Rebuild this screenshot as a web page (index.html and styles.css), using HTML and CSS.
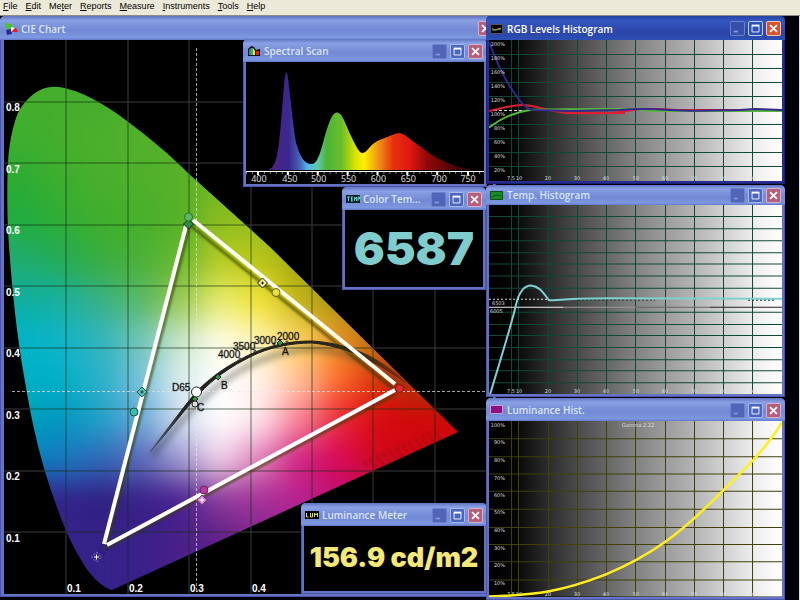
FILE: index.html
```
<!DOCTYPE html>
<html lang="en">
<head>
<meta charset="utf-8">
<title>CIE Chart</title>
<link rel="stylesheet" href="styles.css">
</head>
<body>
<svg class="defs" aria-hidden="true">
  <defs>
    <symbol id="i-min" viewBox="0 0 15 15"><path d="M3 11h5" stroke="currentColor" stroke-width="2"/></symbol>
    <symbol id="i-max" viewBox="0 0 15 15"><path d="M3.500 4.500h8v7h-8z" fill="none" stroke="currentColor"/><path d="M3 4h9" stroke="currentColor" stroke-width="2"/></symbol>
    <symbol id="i-close" viewBox="0 0 15 15"><path d="M3.500 3.500l8 8M11.500 3.500l-8 8" stroke="currentColor" stroke-width="2"/></symbol>
    <linearGradient id="gray" x1="0" x2="1" y1="0" y2="0">
      <stop offset="0" stop-color="#000"/><stop offset=".09" stop-color="#060606"/><stop offset=".2" stop-color="#2c2c2c"/><stop offset=".3" stop-color="#4a4a4a"/><stop offset=".5" stop-color="#828282"/><stop offset=".7" stop-color="#b4b4b4"/><stop offset=".9" stop-color="#ececec"/><stop offset="1" stop-color="#fff"/>
    </linearGradient>
  </defs>
</svg>
<nav class="menubar">
  <button><u>F</u>ile</button><button><u>E</u>dit</button><button>Me<u>t</u>er</button><button><u>R</u>eports</button><button><u>M</u>easure</button><button><u>I</u>nstruments</button><button><u>T</u>ools</button><button><u>H</u>elp</button>
</nav>
<main class="desktop">
  <section class="window cie">
    <header class="titlebar">
      <svg class="app-icon" viewBox="0 0 14 12"><path d="M0 0l8 1 1 5-6 1z" fill="#4fbf38"/><path d="M7 5l5 0 2 4-6 0z" fill="#d22"/><path d="M2 7l5-1 1 5-5 1z" fill="#2b2a8c"/><path d="M7 4l4 1-4 4z" fill="#eee"/></svg>
      <h2>CIE Chart</h2>
      <button class="ctl close" aria-label="Close"><svg><use href="#i-close"/></svg></button>
    </header>
    <svg class="view" viewBox="4 40 489 554" preserveAspectRatio="none">
      <defs>
        <clipPath id="locus"><path d="M112 590C102 588 92 576 86 568C74 549 66 533 58 510C50 488 44 470 38 446C32 422 28 400 24 376C16 330 11 280 8 230C7 205 7 180 8 163C9 145 12 130 16 118C20 106 30 95 40 90C46 87 56 85 68 89C80 92 90 97 100 103C112 110 118 114 127 121C150 138 170 155 188 173L218 200L270 247L458 432Z"/></clipPath>
        <filter id="soft" x="-20%" y="-20%" width="140%" height="140%" color-interpolation-filters="sRGB"><feGaussianBlur stdDeviation="15"/></filter>
        <filter id="shade" x="-20%" y="-20%" width="140%" height="140%"><feGaussianBlur stdDeviation="3"/></filter>
        <filter id="fine" x="-20%" y="-20%" width="140%" height="140%"><feGaussianBlur stdDeviation="1"/></filter>
        <linearGradient id="arc" gradientUnits="userSpaceOnUse" x1="150" y1="0" x2="406" y2="0"><stop offset="0" stop-color="#222" stop-opacity=".3"/><stop offset=".12" stop-color="#222"/><stop offset=".8" stop-color="#2a2418"/><stop offset="1" stop-color="#402010" stop-opacity=".4"/></linearGradient>
      </defs>
      <rect x="4" y="40" width="489" height="554" fill="#000"/>
      <path class="grid-out" d="M66 40V594M128 40V594M189 40V594M251 40V594M312 40V594M373 40V594M435 40V594M4 102H493M4 163H493M4 225H493M4 286H493M4 348H493M4 409H493M4 471H493M4 532H493"/>
      <g clip-path="url(#locus)">
        <g id="field" filter="url(#soft)"></g>
        <path class="grid-in" d="M66 40V594M128 40V594M189 40V594M251 40V594M312 40V594M373 40V594M435 40V594M4 102H493M4 163H493M4 225H493M4 286H493M4 348H493M4 409H493M4 471H493M4 532H493"/>
        <path d="M364 464L440 430M375 468L445 436" stroke="#8c0c08" stroke-width="6" stroke-dasharray="3 4" opacity=".4" filter="url(#fine)"/>
        <path d="M152 456C178 424 200 400 220 384C255 358 285 350 312 349C350 350 380 366 404 390" fill="none" stroke="#333" stroke-width="6" opacity=".4" filter="url(#shade)"/>
      </g>
      <path d="M196.500 48V590M12 391.500H487" class="cross"/>
      <path d="M150 452C168 428 183 408 196 392C214 374 230 364 251 354C275 343 295 341 312 341C345 343 378 355 406 383C374 360 345 346 312 343C290 343 268 348 252 356C230 367 214 378 199 394C184 410 170 430 150 452Z" fill="url(#arc)" stroke="url(#arc)"/>
      <path d="M189 228L106 548L396 394M191 226L396 391" fill="none" stroke="#3a3a00" stroke-width="3" opacity=".65" filter="url(#fine)"/>
      <path d="M187 222L104 544" stroke="#fff" stroke-width="4"/><path d="M193 220L395 384" stroke="#fffff0" stroke-width="4"/><path d="M107 545L395 390" stroke="#fff" stroke-width="4"/>
      <g stroke="#222">
        <path d="M188.500 219l5 5-5 5-5-5z" fill="#2f8a40"/><circle cx="188.500" cy="217" r="4" fill="#5fb868" stroke="#2c7038"/>
        <path d="M262.500 278l5 5-5 5-5-5z" fill="#f4ec90"/><path d="M261 283h3M262.500 281.500v3"/>
        <circle cx="276" cy="292.500" r="4" fill="#e6e23c" stroke="#666010"/>
        <path d="M142 387l5 5-5 5-5-5z" fill="#54c4b4" stroke="#145858"/><path d="M140.500 392h3M142 390.500v3"/>
        <circle cx="134" cy="412" r="4" fill="#3cbcae" stroke="#145858"/>
        <path d="M202 495l5 5-5 5-5-5z" fill="#d080c8" stroke="#804080"/><path d="M199.500 500h5M202 497.500v5" stroke="#fff"/>
        <circle cx="204" cy="490" r="4" fill="#b83a98" stroke="#702060"/>
        <path d="M96.500 552l5 5-5 5-5-5z" fill="none" stroke="#9890d0" stroke-dasharray="2 2"/><path d="M94 557h5M96.500 554.500v5" stroke="#fff"/><circle cx="103" cy="549" r="4" fill="none" stroke="#201858" stroke-dasharray="2 2"/>
        <circle cx="399.500" cy="388.500" r="4" fill="#e02c28" stroke="#901010"/>
        <path d="M218 374l3 3-3 3-3-3z" fill="#2c9c38"/><path d="M280 340l3 3-3 3-3-3z" fill="#2c9c50"/><path d="M195 396l3 3-3 3-3-3z" fill="#2c9c38"/>
        <circle cx="195" cy="404" r="3" fill="#ddd"/><circle cx="196.500" cy="392" r="5" fill="#fff"/>
        <circle cx="240" cy="359" r="1" fill="#fff"/><circle cx="255" cy="351" r="1" fill="#fff"/><circle cx="274" cy="344" r="1" fill="#fff"/><circle cx="287" cy="342" r="1" fill="#fff"/>
      </g>
      <g class="marks"><text x="172" y="391">D65</text><text x="218" y="358">4000</text><text x="233" y="350">3500</text><text x="254" y="344">3000</text><text x="277" y="340">2000</text><text x="282" y="355">A</text><text x="221" y="389">B</text><text x="197" y="411">C</text></g>
      <g class="axis"><text x="6" y="111">0.8</text><text x="6" y="173">0.7</text><text x="6" y="234">0.6</text><text x="6" y="296">0.5</text><text x="6" y="357">0.4</text><text x="6" y="419">0.3</text><text x="6" y="480">0.2</text><text x="6" y="542">0.1</text><text x="67" y="592">0.1</text><text x="129" y="592">0.2</text><text x="190" y="592">0.3</text><text x="252" y="592">0.4</text></g>
    </svg>
  </section>

  <section class="window spectral">
    <header class="titlebar">
      <svg class="app-icon" viewBox="0 0 14 12"><path d="M1 11V4l3-3 3 1 2 3 4-1v7z" fill="#111"/><path d="M2 10V5l2-2v7z" fill="#38b"/><path d="M4 10V3h2v7z" fill="#3b4"/><path d="M6 10V3l2 3v4z" fill="#fe3"/><path d="M9 10V6h3v4z" fill="#d22"/></svg>
      <h2>Spectral Scan</h2>
      <button class="ctl min" aria-label="Minimize"><svg><use href="#i-min"/></svg></button><button class="ctl" aria-label="Maximize"><svg><use href="#i-max"/></svg></button><button class="ctl close" aria-label="Close"><svg><use href="#i-close"/></svg></button>
    </header>
    <svg class="view" viewBox="246 62 239 122" preserveAspectRatio="none">
      <defs><linearGradient id="rainbow" gradientUnits="userSpaceOnUse" x1="268" x2="478" y1="0" y2="0"><stop offset="0" stop-color="#502080"/><stop offset=".1" stop-color="#3a2890"/><stop offset=".15" stop-color="#4860b8"/><stop offset=".19" stop-color="#50b8e8"/><stop offset=".24" stop-color="#60c8a0"/><stop offset=".28" stop-color="#4cb438"/><stop offset=".35" stop-color="#68bc28"/><stop offset=".42" stop-color="#dce400"/><stop offset=".46" stop-color="#fff000"/><stop offset=".53" stop-color="#f09018"/><stop offset=".6" stop-color="#e83010"/><stop offset=".68" stop-color="#e01810"/><stop offset=".76" stop-color="#900808"/><stop offset=".9" stop-color="#480404"/><stop offset="1" stop-color="#200000"/></linearGradient></defs>
      <rect x="246" y="62" width="239" height="122"/>
      <path fill="url(#rainbow)" d="M268 170C276 168 277 155 279 144C283 110 284 74 286.500 72C289 74 291 110 296 142C300 156 304 164 312 164C318 164 321 152 326 133C330 120 333 113 337 112.500C342 112 345 121 350 133C356 145 359 153 363 153C368 153 370 144 380 140C386 138 396 133 400 133C406 134 410 139 416 143C424 148 430 154 438 158C450 164 462 169 478 170Z"/>
      <path d="M246 171.500H485" stroke="#fff"/><path d="M258 171v4M288 171v4M318 171v4M348 171v4M378 171v4M408 171v4M438 171v4M469 171v4" stroke="#fff" stroke-width="2"/><path d="M246 173h239" stroke="#fff" stroke-dasharray="1 5"/>
      <g class="ticks"><text x="259" y="182">400</text><text x="290" y="182">450</text><text x="319" y="182">500</text><text x="349" y="182">550</text><text x="379" y="182">600</text><text x="409" y="182">650</text><text x="440" y="182">700</text><text x="469" y="182">750</text></g>
    </svg>
  </section>

  <section class="window temp-meter">
    <header class="titlebar">
      <svg class="app-icon" viewBox="0 0 14 12"><path fill="#04242c" d="M0 2h14v8H0z"/><path d="M1 4h3M2.500 4v4M5 4h2M5 6h2M5 8h2M5.500 4v4M8.500 8V4l1 2 1-2v4M12 8V4h1.500v2H12" stroke="#6cc" fill="none"/></svg>
      <h2>Color Tem...</h2>
      <button class="ctl min" aria-label="Minimize"><svg><use href="#i-min"/></svg></button><button class="ctl" aria-label="Maximize"><svg><use href="#i-max"/></svg></button><button class="ctl close" aria-label="Close"><svg><use href="#i-close"/></svg></button>
    </header>
    <output class="readout kelvin">6587</output>
  </section>

  <section class="window lum-meter">
    <header class="titlebar">
      <svg class="app-icon" viewBox="0 0 14 12"><path fill="#000" d="M0 2h14v8H0z"/><path d="M1.500 4v4h2M5.500 4v4h2v-4M9.500 8V4l1.500 2 1.500-2v4" stroke="#dd6" fill="none"/></svg>
      <h2>Luminance Meter</h2>
      <button class="ctl min" aria-label="Minimize"><svg><use href="#i-min"/></svg></button><button class="ctl" aria-label="Maximize"><svg><use href="#i-max"/></svg></button><button class="ctl close" aria-label="Close"><svg><use href="#i-close"/></svg></button>
    </header>
    <output class="readout candela">156.9 cd/m2</output>
  </section>

  <div class="histograms">
    <section class="window active rgb">
      <header class="titlebar">
        <svg class="app-icon" viewBox="0 0 14 12"><path d="M.500 1.500h12v9H.500z" fill="#000" stroke="#555"/><path d="M2 5l3 2 6-2" stroke="#e84" fill="none"/><path d="M2 7h4l5-1" stroke="#6a6" fill="none"/></svg>
        <h2>RGB Levels Histogram</h2>
        <button class="ctl min" aria-label="Minimize"><svg><use href="#i-min"/></svg></button><button class="ctl" aria-label="Maximize"><svg><use href="#i-max"/></svg></button><button class="ctl close" aria-label="Close"><svg><use href="#i-close"/></svg></button>
      </header>
      <svg class="view" viewBox="489 40 293 141" preserveAspectRatio="none">
        <rect x="489" y="40" width="293" height="141" fill="url(#gray)"/>
        <path class="grid-teal" d="M489 54.500H782M489 68.500H782M489 82.500H782M489 96.500H782M489 124.500H782M489 138.500H782M489 152.500H782M489 166.500H782M511.500 40V181M518.500 40V181M548.500 40V181M577.500 40V181M606.500 40V181M635.500 40V181M665.500 40V181M694.500 40V181M723.500 40V181M752.500 40V181"/>
        <path d="M489 110.500H540" stroke="#ddd" stroke-dasharray="3 2"/>
        <g fill="none" stroke-width="2">
          <path d="M489 111C500 109 510 105 522 105C535 105 543 110 560 112C575 114 590 113 610 113C625 112 630 110 640 109H660L675 110H782" stroke="#dc2030"/>
          <path d="M489 127.500C500 119 515 112 530 110C545 109 570 109 605 109H635L650 111H782" stroke="#58b83c"/>
          <path d="M489 42C496 60 505 80 513 91C520 101 524 108 532 110C550 110 560 111 570 111L620 110C640 108 655 109 670 110C700 112 725 110 740 110L755 109L782 110" stroke="#34288c"/>
          <path d="M564 113H625" stroke="#dc2030"/>
        </g>
        <g class="tiny end"><text x="505" y="46">200%</text><text x="505" y="60">180%</text><text x="505" y="74">160%</text><text x="505" y="88">140%</text><text x="505" y="102">120%</text><text x="505" y="116">100%</text><text x="505" y="130">80%</text><text x="505" y="144">60%</text><text x="505" y="158">40%</text><text x="505" y="172">20%</text></g>
        <g class="tiny mid"><text x="511" y="180">7.5</text><text x="519" y="180">10</text><text x="548" y="180">20</text><text x="577" y="180">30</text><text x="606" y="180">40</text><text x="636" y="180">50</text><text x="665" y="180">60</text><text x="694" y="180">70</text><text x="723" y="180">80</text><text x="753" y="180">90</text></g>
      </svg>
    </section>
    <section class="window temp-hist">
      <header class="titlebar">
        <svg class="app-icon" viewBox="0 0 14 12"><path d="M.500 2.500h12v8H.500z" fill="#188c20" stroke="#0c5010"/><path d="M2 8l4-2 5 1" stroke="#052" fill="none"/></svg>
        <h2>Temp. Histogram</h2>
        <button class="ctl min" aria-label="Minimize"><svg><use href="#i-min"/></svg></button><button class="ctl" aria-label="Maximize"><svg><use href="#i-max"/></svg></button><button class="ctl close" aria-label="Close"><svg><use href="#i-close"/></svg></button>
      </header>
      <svg class="view" viewBox="489 205 293 188" preserveAspectRatio="none">
        <rect x="489" y="205" width="293" height="188" fill="url(#gray)"/>
        <path class="grid-teal" d="M489 216.500H782M489 228.500H782M489 240.500H782M489 252.500H782M489 263.500H782M489 275.500H782M489 287.500H782M489 311.500H782M489 323.500H782M489 334.500H782M489 346.500H782M489 358.500H782M489 369.500H782M489 381.500H782M511.500 205V393M518.500 205V393M548.500 205V393M577.500 205V393M606.500 205V393M635.500 205V393M665.500 205V393M694.500 205V393M723.500 205V393M752.500 205V393"/>
        <path d="M489 306.500H563" stroke="#eee"/><path d="M563 306.500H636" stroke="#999"/><path d="M636 306.500H710" stroke="#666"/><path d="M710 306.500H782" stroke="#222"/>
        <path d="M490 393C500 360 512 322 516 304C520 288 526 285 531 285C540 286 543 292 549 299.500C558 300 568 298 578 298L610 297.500L782 298" fill="none" stroke="#7fd0d0" stroke-width="2"/>
        <path d="M489 298.500H548" stroke="#ddd" stroke-dasharray="2 2"/><path d="M578 299.500H655M748 299.500H775" stroke="#244" stroke-dasharray="2 2"/>
        <g class="tiny"><text x="492" y="304">6503</text><text x="490" y="312">6005</text></g>
        <g class="tiny mid"><text x="511" y="392">7.5</text><text x="519" y="392">10</text><text x="548" y="392">20</text><text x="577" y="392">30</text><text x="606" y="392">40</text><text x="636" y="392">50</text><text x="665" y="392">60</text><text x="694" y="392">70</text><text x="723" y="392">80</text><text x="753" y="392">90</text></g>
      </svg>
    </section>
    <section class="window lum-hist">
      <header class="titlebar">
        <svg class="app-icon" viewBox="0 0 14 12"><path d="M.500 1.500h12v8H.500z" fill="#901080" stroke="#c8a0d0"/></svg>
        <h2>Luminance Hist.</h2>
        <button class="ctl min" aria-label="Minimize"><svg><use href="#i-min"/></svg></button><button class="ctl" aria-label="Maximize"><svg><use href="#i-max"/></svg></button><button class="ctl close" aria-label="Close"><svg><use href="#i-close"/></svg></button>
      </header>
      <svg class="view" viewBox="489 421 293 174" preserveAspectRatio="none">
        <rect x="489" y="421" width="293" height="174" fill="url(#gray)"/>
        <path class="grid-olive" d="M489 438.500H782M489 456.500H782M489 473.500H782M489 490.500H782M489 508.500H782M489 526.500H782M489 543.500H782M489 560.500H782M489 578.500H782M511.500 421V595M518.500 421V595M548.500 421V595M577.500 421V595M606.500 421V595M635.500 421V595M665.500 421V595M694.500 421V595M723.500 421V595M752.500 421V595"/>
        <g class="tiny end"><text x="505" y="427">100%</text><text x="505" y="444">90%</text><text x="505" y="462">80%</text><text x="505" y="479">70%</text><text x="505" y="496">60%</text><text x="505" y="513">50%</text><text x="505" y="531">40%</text><text x="505" y="549">30%</text><text x="505" y="566">20%</text><text x="505" y="584">10%</text></g>
        <g class="tiny mid"><text x="638" y="427">Gamma 2.22</text><text x="511" y="594">7.5</text><text x="519" y="594">10</text><text x="548" y="594">20</text><text x="577" y="594">30</text><text x="606" y="594">40</text><text x="636" y="594">50</text><text x="665" y="594">60</text><text x="694" y="594">70</text><text x="723" y="594">80</text><text x="753" y="594">90</text></g>
        <path d="M489 595C515 594 532 593 548 590C570 586 588 580 606 573C628 564 648 553 665 541C685 527 705 508 723 490C735 478 744 469 753 460C764 448 775 434 782 422" fill="none" stroke="#ffee20" stroke-width="2.500"/>
      </svg>
    </section>
  </div>
</main>
<script src="script.js"></script>
</body>
</html>
```
FILE: styles.css
```
* { box-sizing: border-box; }
body {
  margin: 0;
  min-height: 100vh;
  display: flex;
  flex-direction: column;
  background: #000;
  font-family: "Open Sans", "Noto Sans", sans-serif;
  overflow: hidden;
}
button { font: inherit; border: 0; padding: 0; background: none; }
h2 { margin: 0; }
.defs { position: absolute; width: 0; height: 0; }

.menubar {
  display: flex;
  gap: 8px;
  height: 16px;
  padding: 0 3px 3px;
  background: #ece9d8;
  border-bottom: 1px solid #8c8c84;
  font-family: "Liberation Sans", sans-serif;
  font-size: 9px;
  line-height: 12px;
  color: #111;
}

.desktop {
  position: relative;
  flex: 1;
  display: grid;
  grid-template-columns: minmax(0, 1fr) 299px;
  padding-right: 14px;
  border-right: 1px solid #ddd;
  border-bottom: 1px solid #ccc;
  background: #000008;
}

.window {
  display: flex;
  flex-direction: column;
  min-width: 0;
  min-height: 0;
  padding: 0 3px 3px;
  background: #6673c2;
  border-radius: 5px 5px 0 0;
  box-shadow: inset 0 0 0 1px #4a56ac;
}
.titlebar {
  display: flex;
  align-items: center;
  gap: 3px;
  flex: 0 0 23px;
  margin: 0 -3px;
  padding: 1px 4px 0;
  border-radius: 5px 5px 0 0;
  background: linear-gradient(#6074c0, #88a0e4 18%, #7288d4 60%, #7c98e0 90%, #6478c8);
  color: #dbe6fb;
}
.titlebar h2 {
  flex: 1;
  font-size: 10px;
  font-weight: 600;
  line-height: 14px;
  white-space: nowrap;
}
.app-icon { width: 14px; height: 12px; flex: none; }
.ctl {
  width: 15px;
  height: 15px;
  flex: none;
  border: 1px solid #a8b8ec;
  border-radius: 2px;
  background: #4c66bc;
  color: #fff;
}
.ctl svg { display: block; width: 13px; height: 13px; }
.ctl.min { border-color: #6c80cc; background: #5064b8; color: #8498dc; }
.ctl.close { border-color: #d8b0cc; background: #b4607c; }

.active { background: #262c90; box-shadow: inset 0 0 0 1px #1c2070; }
.active .titlebar { background: linear-gradient(#2444a0, #3458c0 20%, #2c44a8 70%, #2c50b4); color: #fff; }
.active .ctl { border-color: #c0ccf0; background: #2c50b8; }
.active .ctl.min { border-color: #6c80cc; background: #3450a8; color: #8ca0e0; }
.active .ctl.close { border-color: #f0c8b8; background: #d85430; }

.view { display: block; flex: 1; width: 100%; min-height: 0; background: #000; }

.cie { margin: 0 -10px 3px 0; padding-left: 4px; }
.cie .titlebar { flex-basis: 24px; margin-left: -4px; padding-right: 3px; }

.histograms {
  position: relative;
  z-index: 3;
  display: flex;
  flex-direction: column;
  gap: 1px;
}
.rgb { flex: 167 1 0; }
.temp-hist { flex: 212 1 0; }
.lum-hist { flex: 201 1 0; }
.rgb .titlebar { flex-basis: 24px; }
.temp-hist .titlebar { flex-basis: 20px; }

.spectral { position: absolute; z-index: 1; left: 243px; top: 23px; width: 244px; height: 148px; }
.temp-meter { position: absolute; z-index: 2; left: 342px; top: 171px; width: 144px; height: 103px; }
.lum-meter { position: absolute; z-index: 2; left: 301px; top: 487px; width: 186px; height: 91px; }

.readout {
  flex: 1;
  display: flex;
  align-items: center;
  justify-content: center;
  padding-bottom: 2px;
  background: #000;
  font-family: Inter, "Open Sans", sans-serif;
  font-weight: 900;
  white-space: nowrap;
}
.kelvin { font-size: 46px; line-height: 46px; color: #80cccc; }
.candela { font-size: 27px; line-height: 27px; color: #f4e878; }

.grid-out { fill: none; stroke: #3c3c3c; }
.grid-in { fill: none; stroke: #103010; stroke-opacity: .65; }
.grid-teal { fill: none; stroke: #104838; }
.grid-olive { fill: none; stroke: #404008; }
.cross { fill: none; stroke: #e8e8e8; stroke-dasharray: 3 2; stroke-opacity: .7; }
.marks { font: 10px "Liberation Sans", sans-serif; fill: #111; stroke: #111; stroke-opacity: .3; }
.axis { font: bold 10px "Liberation Sans", sans-serif; fill: #fff; }
.ticks { font: 9px "Noto Sans", sans-serif; fill: #ddd; text-anchor: middle; }
.tiny { font: 5px "DejaVu Sans", sans-serif; fill: #ddd; }
.end { text-anchor: end; }
.mid { text-anchor: middle; }
```
FILE: script.js
```
// Colour samples of the chromaticity field, one row per 40 units from y = 80.
const rows = [
  "45ae2c 45ae2c 45ae2c 50b02c 55b028",
  "3cae30 45ae2c 4cb02c 52b02a 58b028 60b020",
  "2cac34 3cae2e 48af2c 4eb02a 56b028 70b820 80b820",
  "20ac40 30ad36 40ae2e 48b02a 54b028 8cbc20 98c020 a0b818",
  "20ac70 22ac58 38ad40 48b038 68b830 b8cc20 b8c418 a0a810",
  "10aea0 18b0a0 38b088 58b868 98c850 e8ec70 f4e430 c0b018 a89010",
  "00b4c8 10b4c8 30b4c0 70c4b8 c8e4c8 fffde8 fff2b0 ffd458 e89020 b07010 a06010",
  "00b0c0 00b0c8 28b0c8 78c0d8 dceef0 ffffff fff4ec ffc098 ff6828 d83008 a83808",
  "00a0b8 0098c0 20a0c8 68a8d8 d0dcf0 ffffff ffe4ec f88098 e82838 d80810 d00808",
  "0080c0 1878c0 3068b8 5868b8 a098d0 f0d0e8 e080b8 d02080 d80858 d00818",
  "302088 34228c 302080 382088 482090 8a3a9a a83098 b82090 c01070",
  "352288 352288 352288 382088 482088 602088 802890",
  "352288 352288 352288 382088 482088 602088 802890"
];
const field = document.getElementById("field");
rows.forEach((row, j) => {
  const colours = row.split(" ");
  for (let i = -1; i < 13; i++) {
    const c = document.createElementNS("http://www.w3.org/2000/svg", "rect");
    c.setAttribute("x", i * 40);
    c.setAttribute("y", j === 0 ? 20 : 80 + j * 40);
    c.setAttribute("width", 41);
    c.setAttribute("height", j === 0 || j === 12 ? 101 : 41);
    c.setAttribute("fill", "#" + colours[Math.min(Math.max(i, 0), colours.length - 1)]);
    field.appendChild(c);
  }
});
```
